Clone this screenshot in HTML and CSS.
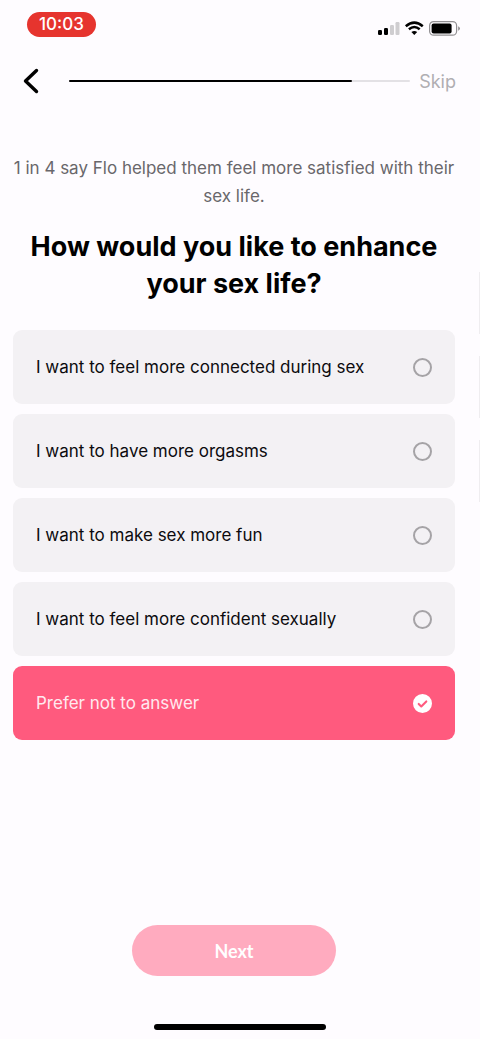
FILE: index.html
```html
<!DOCTYPE html>
<html lang="en">
<head>
<meta charset="utf-8">
<meta name="viewport" content="width=device-width, initial-scale=1">
<title>Flo</title>
<link rel="stylesheet" href="styles.css">
</head>
<body>
<div class="screen">
  <div class="status">
    <span class="clock">10:03</span>
    <svg class="indicators" width="84" height="18" viewBox="0 0 84 18" aria-hidden="true">
      <rect x="1" y="10" width="4" height="5" rx="1.2" fill="#000"/>
      <rect x="7" y="8" width="4" height="7" rx="1.2" fill="#000"/>
      <rect x="13" y="5" width="4" height="10" rx="1.2" fill="#cfcdd0"/>
      <rect x="18.500" y="2" width="4" height="13" rx="1.200" fill="#cfcdd0"/>
      <g fill="none" stroke="#000" stroke-width="2.500">
        <path d="M28.800 6.200Q37.300 -1 45.800 6.200"/>
        <path d="M31.900 9.300Q37.300 4.800 42.700 9.300"/>
      </g>
      <path d="M34.400 12Q37.300 9.800 40.200 12L37.300 15z" fill="#000"/>
      <rect x="52.600" y="1.600" width="27" height="13.600" rx="4" fill="none" stroke="#929093" stroke-width="1.200"/>
      <rect x="54.600" y="3.500" width="20" height="10" rx="2" fill="#000"/>
      <path d="M81.300 6.200q1.500.7 1.500 2.300t-1.500 2.300z" fill="#777578"/>
    </svg>
  </div>

  <header class="nav">
    <button class="back" type="button" aria-label="Back">
      <svg width="16" height="26" viewBox="0 0 16 26" aria-hidden="true"><path d="M13.500 2.500L2.500 13l11 10.500" fill="none" stroke="#000" stroke-width="3.400" stroke-linecap="round" stroke-linejoin="round"/></svg>
    </button>
    <div class="progress" role="progressbar" aria-label="Progress" aria-valuemin="0" aria-valuemax="100" aria-valuenow="83"><div class="progress-fill" style="width:83%"></div></div>
    <a class="skip" href="#">Skip</a>
  </header>

  <main class="content">
    <p class="intro">1 in 4 say Flo helped them feel more satisfied with their sex life.</p>
    <h1 class="title">How would you like to enhance your sex life?</h1>
    <form class="options">
      <label class="option"><span>I want to feel more connected during sex</span><input class="mark" type="radio" name="goal"></label>
      <label class="option"><span>I want to have more orgasms</span><input class="mark" type="radio" name="goal"></label>
      <label class="option"><span>I want to make sex more fun</span><input class="mark" type="radio" name="goal"></label>
      <label class="option"><span>I want to feel more confident sexually</span><input class="mark" type="radio" name="goal"></label>
      <label class="option selected"><span>Prefer not to answer</span><span class="check"><input class="mark" type="radio" name="goal" checked><svg class="tick" width="20" height="20" viewBox="0 0 20 20" aria-hidden="true"><path d="M6 10.500l2.700 2.600L14 7.800" fill="none" stroke="#ff5a7e" stroke-width="2.200" stroke-linecap="round" stroke-linejoin="round"/></svg></span></label>
    </form>
    <button class="next" type="button">Next</button>
  </main>
  <div class="home"></div>
  <div class="peek" aria-hidden="true"><i></i><i></i><i></i></div>
</div>
</body>
</html>
```
FILE: styles.css
```css
* { box-sizing: border-box; }

body {
  margin: 0;
  background: #fefcff;
  color: #0c0b0e;
  font-family: Inter, "Liberation Sans", sans-serif;
  font-size: 17px;
}

.screen {
  position: relative;
  display: flex;
  flex-direction: column;
  min-height: 100vh;
  overflow: hidden;
}

.status {
  display: flex;
  align-items: flex-start;
  justify-content: space-between;
  padding: 12px 19px 0 27px;
}

.clock {
  padding: 0 12px;
  border-radius: 13px;
  background: #e6342e;
  color: #fff;
  font-size: 17px;
  font-weight: 500;
  line-height: 25px;
}

.indicators { margin-top: 8px; }

.nav {
  display: flex;
  align-items: center;
  height: 40px;
  margin-top: 23px;
  padding: 0 24px 0 23px;
}

.back {
  display: flex;
  width: 46px;
  padding: 0;
  border: 0;
  background: none;
}

.progress {
  flex: 1;
  height: 2px;
  border-radius: 1px;
  background: #e3e1e5;
}

.progress-fill {
  height: 2px;
  border-radius: 1px;
  background: #000;
}

.skip {
  margin-left: 9px;
  color: #b0aeb2;
  font-size: 18px;
  text-decoration: none;
}

.content {
  display: flex;
  flex: 1;
  flex-direction: column;
  padding: 53px 25px 0 13px;
}

.intro {
  margin: 0;
  color: #69676b;
  font-size: 17px;
  line-height: 28px;
  text-align: center;
}

.title {
  margin: 18px 0 28px;
  color: #000;
  font-size: 27px;
  font-weight: 700;
  line-height: 37px;
  text-align: center;
}

.options {
  display: flex;
  flex-direction: column;
  gap: 10px;
}

.option {
  display: flex;
  align-items: center;
  justify-content: space-between;
  min-height: 74px;
  padding: 0 23px;
  border-radius: 9px;
  background: #f3f1f4;
}

.selected {
  background: #ff5a7e;
  color: #ffe9ef;
}

.mark {
  appearance: none;
  display: block;
  width: 19px;
  height: 19px;
  margin: 0;
  border: 2px solid #a5a3a6;
  border-radius: 50%;
}

.mark:checked {
  border-color: #fff;
  background: #fff;
}

.check { display: grid; }

.check > * { grid-area: 1 / 1; place-self: center; }

.tick { width: 19px; height: 19px; }

.next {
  align-self: center;
  width: 204px;
  height: 51px;
  margin-top: auto;
  border: 0;
  border-radius: 26px;
  background: #ffabbf;
  color: #fff;
  font-family: Lato, sans-serif;
  font-size: 18px;
  font-weight: 700;
}

.home {
  align-self: center;
  width: 172px;
  height: 6px;
  margin: 48px 0 9px;
  border-radius: 3px;
  background: #000;
}

.peek {
  position: absolute;
  top: 272px;
  right: 0;
  display: grid;
  gap: 22px;
}

.peek i {
  width: 1px;
  height: 62px;
  background: #efedf0;
}
```
